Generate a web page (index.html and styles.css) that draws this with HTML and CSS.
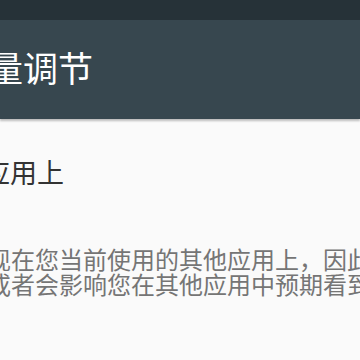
FILE: index.html
```html
<!DOCTYPE html>
<html lang="zh-CN">
<head>
  <meta charset="UTF-8" />
  <meta name="viewport" content="width=device-width, initial-scale=1" />
  <title>音量调节</title>
  <link rel="stylesheet" href="styles.css">
</head>
<body>
  <div class="status-bar"></div>
  <div class="toolbar">
    <h1 class="toolbar-title">量调节</h1>
  </div>

  <div class="pref">
    <div class="pref-title">应用上</div>
    <div class="pref-summary">
      现在您当前使用的其他应用上，因此<br>
      或者会影响您在其他应用中预期看到
    </div>
  </div>
</body>
</html>
```

FILE: styles.css
```css
html, body {
  margin: 0;
  width: 360px;
  height: 360px;
  overflow: hidden;
}
body {
  font-family: "Noto Sans CJK SC", "Noto Sans", sans-serif;
  background-color: #fafafa;
}
.status-bar {
  height: 20px;
  background-color: #263238;
}
.toolbar {
  height: 99px;
  background-color: #37474f;
  display: flex;
  align-items: center;
  box-shadow: 0 2px 2px rgba(0,0,0,0.25);
  position: relative;
}
.toolbar-title {
  margin: 0 0 6px -12px;
  font-size: 35px;
  font-weight: normal;
  line-height: 40px;
  color: #fff;
  white-space: nowrap;
}
.pref {
  padding-top: 37px;
}
.pref-title {
  margin-left: -17px;
  font-size: 27px;
  line-height: 32px;
  color: #333;
  white-space: nowrap;
}
.pref-summary {
  margin-top: 58px;
  margin-left: -13px;
  font-size: 24px;
  line-height: 25px;
  color: #757575;
  white-space: nowrap;
}
```
